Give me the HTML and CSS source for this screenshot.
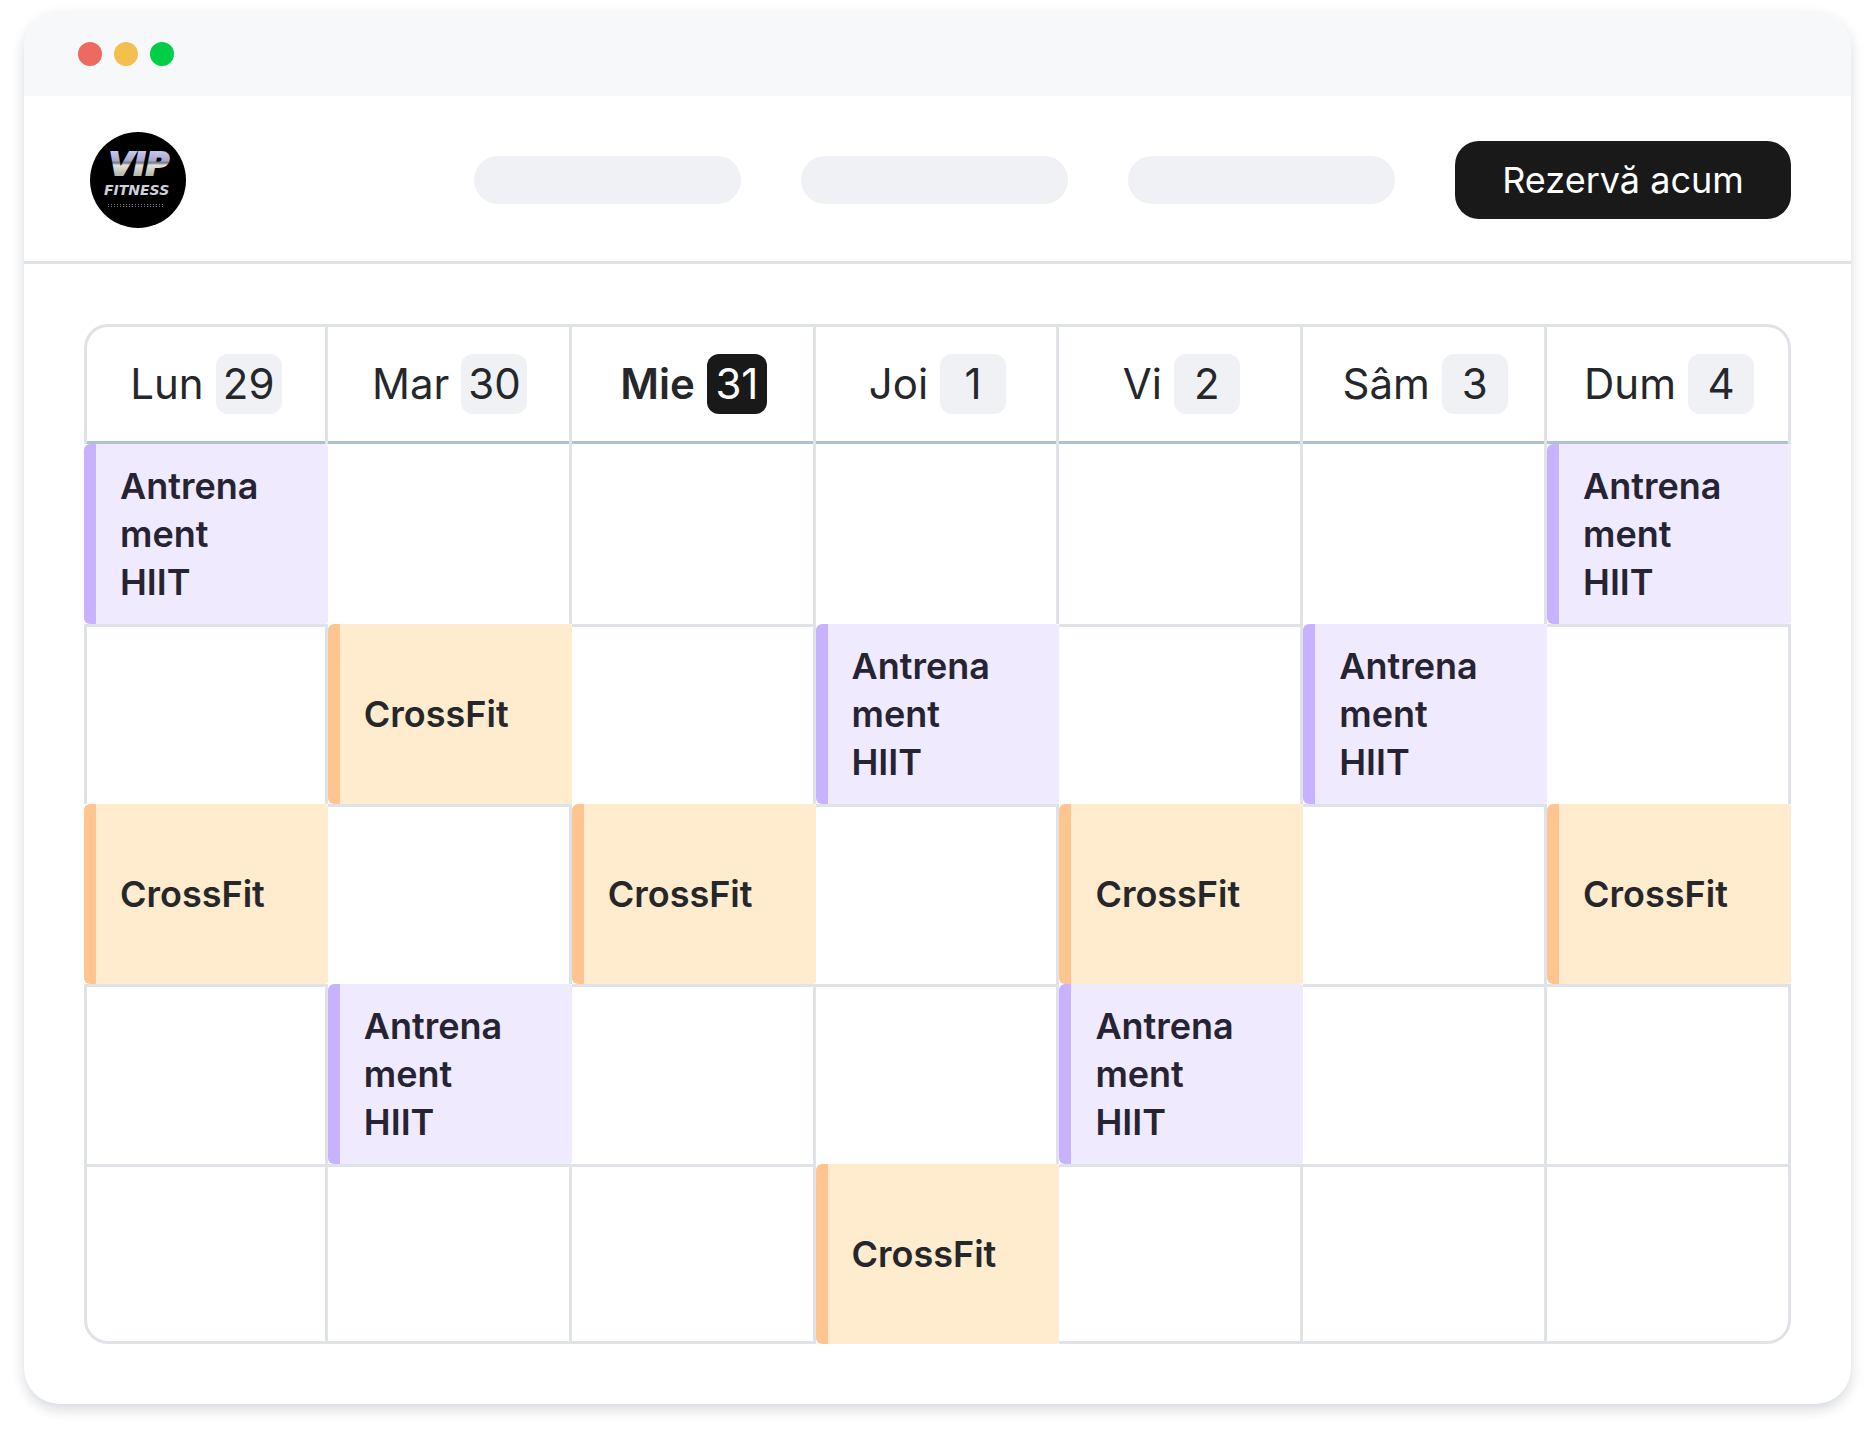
FILE: index.html
```html
<!DOCTYPE html>
<html lang="ro">
<head>
<meta charset="utf-8">
<meta name="viewport" content="width=device-width, initial-scale=1">
<title>VIP Fitness</title>
<link rel="stylesheet" href="styles.css">
</head>
<body>
<div class="window">
  <div class="titlebar">
    <span class="dot dot-red"></span>
    <span class="dot dot-yellow"></span>
    <span class="dot dot-green"></span>
  </div>
  <header class="header">
    <svg class="logo" viewBox="0 0 96 96" role="img" aria-label="VIP Fitness">
      <defs>
        <linearGradient id="chrome" gradientUnits="userSpaceOnUse" x1="0" y1="20" x2="0" y2="44">
          <stop offset="0" stop-color="#c4c4ec"/>
          <stop offset="0.35" stop-color="#a9a9cc"/>
          <stop offset="0.45" stop-color="#77778a"/>
          <stop offset="0.55" stop-color="#e2e2dc"/>
          <stop offset="1" stop-color="#b4b4a8"/>
        </linearGradient>
      </defs>
      <circle cx="48" cy="48" r="48" fill="#000"/>
      <text class="logo-name" x="19" y="43" fill="url(#chrome)" stroke="url(#chrome)">VIP</text>
      <text class="logo-sub" x="14" y="63" fill="#d0d0dc">FITNESS</text>
      <path d="M18 72.500H73M18 74.500H73" stroke="#777" stroke-width="1" stroke-dasharray="1 2"/>
    </svg>
    <nav class="nav" aria-label="Meniu">
      <span class="nav-item"></span>
      <span class="nav-item"></span>
      <span class="nav-item"></span>
      <button class="reserve" type="button">Rezervă acum</button>
    </nav>
  </header>
  <main class="content">
    <table class="calendar">
      <thead>
        <tr>
          <th scope="col"><div class="day">Lun <span class="date">29</span></div></th>
          <th scope="col"><div class="day">Mar <span class="date">30</span></div></th>
          <th scope="col"><div class="day today">Mie <span class="date">31</span></div></th>
          <th scope="col"><div class="day">Joi <span class="date">1</span></div></th>
          <th scope="col"><div class="day">Vi <span class="date">2</span></div></th>
          <th scope="col"><div class="day">Sâm <span class="date">3</span></div></th>
          <th scope="col"><div class="day">Dum <span class="date">4</span></div></th>
        </tr>
      </thead>
      <tbody>
        <tr>
          <td class="event hiit">Antrena<wbr>ment HIIT</td><td></td><td></td><td></td><td></td><td></td>
          <td class="event hiit">Antrena<wbr>ment HIIT</td>
        </tr>
        <tr>
          <td></td><td class="event crossfit">CrossFit</td><td></td>
          <td class="event hiit">Antrena<wbr>ment HIIT</td><td></td>
          <td class="event hiit">Antrena<wbr>ment HIIT</td><td></td>
        </tr>
        <tr>
          <td class="event crossfit">CrossFit</td><td></td>
          <td class="event crossfit">CrossFit</td><td></td>
          <td class="event crossfit">CrossFit</td><td></td>
          <td class="event crossfit">CrossFit</td>
        </tr>
        <tr>
          <td></td><td class="event hiit">Antrena<wbr>ment HIIT</td><td></td><td></td>
          <td class="event hiit">Antrena<wbr>ment HIIT</td><td></td><td></td>
        </tr>
        <tr>
          <td></td><td></td><td></td><td class="event crossfit">CrossFit</td><td></td><td></td><td></td>
        </tr>
      </tbody>
    </table>
  </main>
</div>
</body>
</html>
```
FILE: styles.css
```css
:root {
  --line: #dfe3e8;
  --line-strong: #b2bfcc;
  --ink: #25272b;
  --black: #191919;
  --muted: #f0f1f5;
}

* {
  box-sizing: border-box;
}

body {
  margin: 0;
  padding: 12px 24px 36px;
  background: #fff;
  color: var(--ink);
  font-family: Inter, "Liberation Sans", sans-serif;
}

.window {
  overflow: hidden;
  border-radius: 36px;
  background: #fff;
  box-shadow: 0 6px 12px rgba(40, 55, 80, 0.14), 0 4px 18px rgba(40, 55, 80, 0.05);
}

.titlebar {
  display: flex;
  gap: 12px;
  padding: 30px 54px;
  background: #f6f8fa;
}

.dot {
  width: 24px;
  height: 24px;
  border-radius: 50%;
}

.dot-red { background: #ed6a5e; }
.dot-yellow { background: #f3bf4f; }
.dot-green { background: #00ce46; }

.header {
  display: flex;
  align-items: center;
  justify-content: space-between;
  gap: 60px;
  padding: 36px 60px 33px 66px;
  border-bottom: 3px solid var(--line);
}

.logo {
  flex: none;
  width: 96px;
  height: 96px;
}

.logo-name,
.logo-sub {
  font-family: "DejaVu Sans", sans-serif;
  font-weight: 700;
  font-style: italic;
}

.logo-name {
  font-size: 32px;
  stroke-width: 2px;
}

.logo-sub { font-size: 14px; }

.nav {
  display: flex;
  align-items: center;
  gap: 60px;
}

.nav-item {
  width: 267px;
  height: 48px;
  border-radius: 24px;
  background: var(--muted);
}

.reserve {
  width: 336px;
  height: 78px;
  padding: 0;
  border: 0;
  border-radius: 24px;
  background: var(--black);
  color: #fff;
  font: 400 36px/48px Inter, "Liberation Sans", sans-serif;
}

.content {
  padding: 60px;
}

.calendar {
  width: 100%;
  table-layout: fixed;
  border-collapse: separate;
  border-spacing: 0;
}

.calendar th {
  padding: 0;
  border: 0 solid var(--line);
  border-width: 3px 3px 0 0;
  font-weight: 400;
}

.calendar td {
  height: 180px;
  padding: 0;
  border: 0 solid var(--line);
  border-width: 3px 3px 0 0;
}

.calendar th:first-child,
.calendar td:first-child {
  border-left-width: 3px;
}

.calendar tbody tr:first-child td {
  border-top-width: 0;
}

.calendar tbody tr:last-child td {
  border-bottom-width: 3px;
}

.calendar th:first-child { border-top-left-radius: 24px; }
.calendar th:last-child { border-top-right-radius: 24px; }
.calendar tr:last-child td:first-child { border-bottom-left-radius: 24px; }
.calendar tr:last-child td:last-child { border-bottom-right-radius: 24px; }

.day {
  display: flex;
  align-items: center;
  justify-content: center;
  gap: 12px;
  height: 117px;
  border-bottom: 3px solid var(--line-strong);
  font-size: 42px;
  line-height: 60px;
}

th + th .day {
  padding-left: 3px;
}

.date {
  min-width: 66px;
  border-radius: 12px;
  background: var(--muted);
  text-align: center;
}

.today {
  font-weight: 600;
}

.today .date {
  min-width: 60px;
  background: var(--black);
  color: #fff;
  font-weight: 400;
}

.calendar tbody tr .event {
  padding: 0 48px 0 24px;
  border: 0;
  border-left: 12px solid;
  border-radius: 6px 3px 3px 6px;
  font-size: 36px;
  font-weight: 600;
  line-height: 48px;
}

.calendar tbody tr .hiit {
  border-color: #c6b2ff;
  background: #f0eaff;
  color: #262433;
}

.calendar tbody tr .crossfit {
  border-color: #ffc591;
  background: #ffebce;
}
```
